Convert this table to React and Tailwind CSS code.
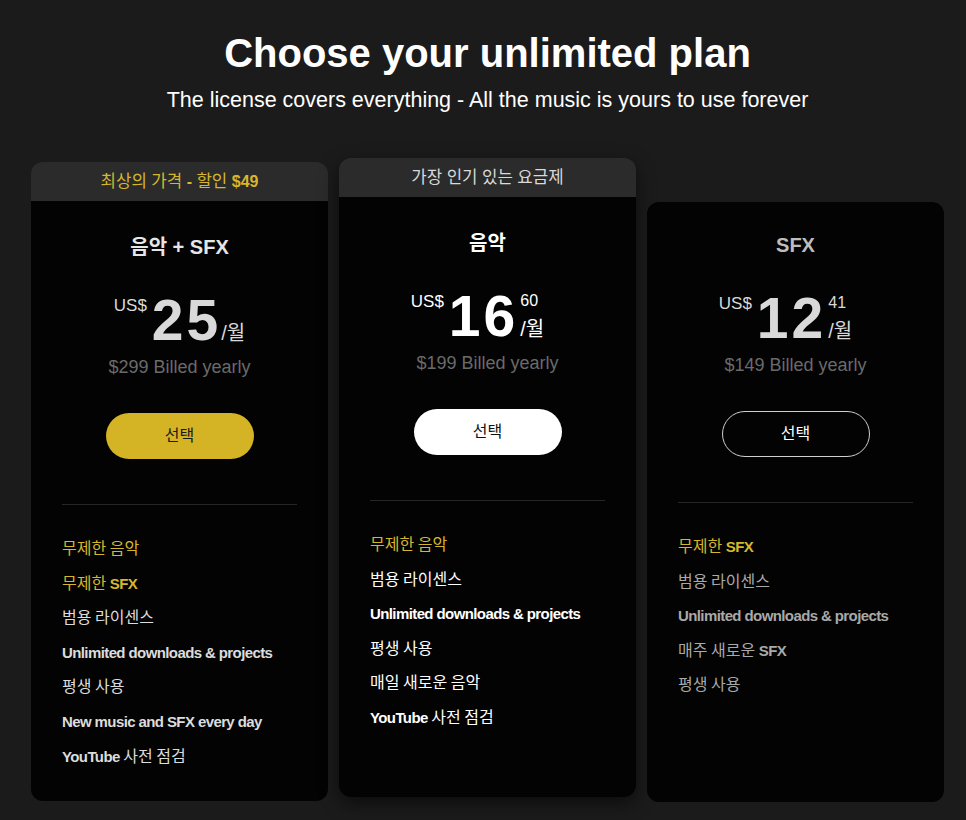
import React from 'react'

const HANGUL = /([\uAC00-\uD7A3]+)/

// Korean runs stay regular, latin runs get the heavier weight
const Mixed = ({ text, latin = 'font-bold', hangul = '' }) => (
  <span>
    {text.split(HANGUL).map((part, i) =>
      HANGUL.test(part) ? (
        <span key={i} className={hangul}>{part}</span>
      ) : (
        <span key={i} className={latin}>{part}</span>
      )
    )}
  </span>
)

const plans = [
  {
    id: 'both',
    badge: '최상의 가격 - 할인 $49',
    badgeTone: 'text-[#d6b72b]',
    title: '음악 + SFX',
    whole: '25',
    cents: null,
    billed: '$299 Billed yearly',
    button: 'yellow',
    titleTone: 'text-[#e6e6e6]',
    priceTone: 'text-[#d9d9d9]',
    featureTone: 'text-[#dcdcdc]',
    features: [
      { text: '무제한 음악', hot: true },
      { text: '무제한 SFX', hot: true },
      { text: '범용 라이센스' },
      { text: 'Unlimited downloads & projects' },
      { text: '평생 사용' },
      { text: 'New music and SFX every day' },
      { text: 'YouTube 사전 점검' }
    ]
  },
  {
    id: 'music',
    badge: '가장 인기 있는 요금제',
    badgeTone: 'text-[#d9d9d9]',
    title: '음악',
    whole: '16',
    cents: '60',
    billed: '$199 Billed yearly',
    button: 'white',
    titleTone: 'text-white',
    priceTone: 'text-white',
    featureTone: 'text-white',
    raised: true,
    features: [
      { text: '무제한 음악', hot: true },
      { text: '범용 라이센스' },
      { text: 'Unlimited downloads & projects' },
      { text: '평생 사용' },
      { text: '매일 새로운 음악' },
      { text: 'YouTube 사전 점검' }
    ]
  },
  {
    id: 'sfx',
    badge: null,
    title: 'SFX',
    whole: '12',
    cents: '41',
    billed: '$149 Billed yearly',
    button: 'outline',
    titleTone: 'text-[#bdbdbd]',
    priceTone: 'text-[#d9d9d9]',
    featureTone: 'text-[#a9a9a9]',
    features: [
      { text: '무제한 SFX', hot: true },
      { text: '범용 라이센스' },
      { text: 'Unlimited downloads & projects' },
      { text: '매주 새로운 SFX' },
      { text: '평생 사용' }
    ]
  }
]

const buttonStyles = {
  yellow: 'bg-[#d4b424] text-[#1a1a1a]',
  white: 'bg-white text-[#111111]',
  outline: 'border border-[#cfcfcf] text-white'
}

const PlanCard = ({ plan }) => (
  <div
    className={`w-[297px] flex flex-col ${plan.badge ? '' : 'mt-[40px]'} ${
      plan.raised ? '-mt-[4px] shadow-[0_6px_18px_rgba(0,0,0,0.55)] rounded-xl' : ''
    }`}
  >
    {plan.badge && (
      <div
        className={`h-[39px] flex items-center justify-center rounded-t-xl bg-[#2b2b2b] text-[16px] ${plan.badgeTone}`}
      >
        <Mixed text={plan.badge} hangul="text-[16.8px]" />
      </div>
    )}
    <div
      className={`h-[600px] bg-[#030303] px-[31px] flex flex-col items-center ${
        plan.badge ? 'rounded-b-xl pt-[32px]' : 'rounded-xl pt-[29px]'
      }`}
    >
      <h2 className={`text-[20px] leading-[28px] font-bold ${plan.titleTone}`}>{plan.title}</h2>

      <div className={`flex items-start justify-center mt-[31px] ${plan.priceTone}`}>
        <span className="text-[17px] leading-none mt-[5px] mr-[5px]">US$</span>
        <span className="text-[57px] font-bold leading-none tracking-[3px]">{plan.whole}</span>
        <div
          className={`flex flex-col h-[57px] ${
            plan.cents ? 'justify-between ml-[2px] mr-[20px]' : 'justify-end'
          }`}
        >
          {plan.cents && <span className="text-[16px] leading-none mt-[5px]">{plan.cents}</span>}
          <span className="text-[20px] leading-none mb-[6px]">/월</span>
        </div>
      </div>

      <p className="text-[18px] leading-[26px] text-[#6a6a6a] mt-[5px]">{plan.billed}</p>

      <button
        className={`mt-[33px] w-[148px] h-[46px] rounded-full text-[16px] ${buttonStyles[plan.button]}`}
      >
        선택
      </button>

      <div className="w-full h-px bg-[#262626] mt-[45px]" />

      <ul className="w-full mt-[33px] flex flex-col gap-[12.6px]">
        {plan.features.map(feature => (
          <li
            key={feature.text}
            className={`text-[15px] leading-[22px] ${feature.hot ? 'text-[#d6b72b]' : plan.featureTone}`}
          >
            <Mixed text={feature.text} latin="font-bold tracking-[-0.04em]" hangul="text-[16px]" />
          </li>
        ))}
      </ul>
    </div>
  </div>
)

export default function App() {
  return (
    <div className="min-h-[820px] bg-[#1b1b1b] font-['Liberation_Sans','Noto_Sans_CJK_KR',sans-serif] pl-[31px] pt-[29px]">
      <div className="w-[913px] flex flex-col items-center">
        <h1 className="text-[40px] leading-[48px] font-bold text-white">Choose your unlimited plan</h1>
        <p className="text-[21.5px] leading-[28px] text-white mt-[9px]">
          The license covers everything - All the music is yours to use forever
        </p>

        <div className="flex items-start gap-[11px] mt-[48px]">
          {plans.map(plan => (
            <PlanCard key={plan.id} plan={plan} />
          ))}
        </div>
      </div>
    </div>
  )
}
